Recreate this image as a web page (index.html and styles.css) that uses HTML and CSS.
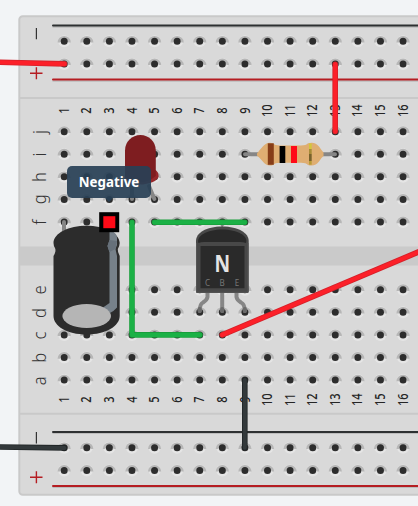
FILE: index.html
```
<!DOCTYPE html>
<html lang="en">
<head>
<meta charset="utf-8">
<title>Breadboard circuit</title>
<link rel="stylesheet" href="styles.css">
</head>
<body>
<main class="workspace">
<svg class="canvas" width="418" height="506" viewBox="0 0 418 506">
  <defs>
    <g id="hole">
      <circle r="6" class="hole-low"/>
      <path d="M-6.6 1.2A6.6 6.6 0 1 1 6.6 1.2H4.2A4.4 4.4 0 0 0-4.2 1.2Z" class="hole-shade"/>
      <circle r="3.5" class="hole-core"/>
    </g>
  </defs>

  <!-- board -->
  <rect class="board" x="19.3" y="16.2" width="440" height="478.6" rx="3.5"/>
  <path class="seam" d="M20 98H418M20 413.8H418"/>
  <rect class="trench" x="20" y="246.5" width="398" height="19"/>
  <path class="rail-shadow" d="M53 27H418M53 81H418M53 433.3H418M53 487.3H418"/>
  <path class="rail-dark" d="M53 25.5H418M53 432H418"/>
  <path class="rail-red" d="M53 79.6H418M53 486H418"/>
  <path class="sign-dark" d="M36.4 28V39.3M36.4 432V443.6"/>
  <path class="sign-red" d="M30 73.3H42.5M36.4 67.2V79.3M30 477.3H42.5M36.4 471.2V483.3"/>
  <g id="holes"></g>
  <g id="labels"></g>

  <!-- LED -->
  <path class="leg" d="M132 184V199M149 186L154.4 199"/>
  <path class="led-rim" d="M125 172V178Q132 185 143 184.500Q158 182 158.600 176Q158.500 172 155.600 170Z"/>
  <path class="led" d="M125 176V150.500A15.400 15.400 0 0 1 155.800 150.500V176Q149 182 140 182Q129 181 125 176Z"/>

  <!-- resistor -->
  <path class="leg" d="M245 154.2H261M319 154.2H335"/>
  <path class="resistor" d="M257 153.5Q260 149.5 262.8 146.5Q267 141.2 273 143.3Q275 145.5 280 145.5H301Q306 145.5 308 143.3Q315 141.2 319 146.5Q321 149.5 323.5 152.5V156Q321 158 319 161.5Q315 167 308 165Q306 162.8 301 162.8H280Q275 162.8 273 165Q267 167 262.8 161.5Q260 158 257 155.5Z"/>
  <path fill="#863d18" d="M267.8 143.3H273.8V164.8H267.8Z"/>
  <path fill="#000" d="M279.6 146H285.3V163H279.6Z"/>
  <path fill="#ff0a17" d="M291 146H297V163H291Z"/>
  <path fill="#d3c63a" d="M309 143.5H311.700V149H309Z"/>
  <path fill="#a78b37" d="M309 149H311.700V154H309Z"/>
  <path fill="#77612c" d="M309 154H311.700V161H309Z"/>
  <path fill="#b99b35" d="M309 161H311.700V164.700H309Z"/>

  <!-- capacitor -->
  <path class="leg" d="M64 222V234"/>
  <path class="can" d="M53.500 243C53.500 233 69 225.700 86.500 225.700S119.700 233 119.700 243Q119.700 246 117.800 249Q117.500 252 119.700 256V316C119.700 326 106 334.500 86.500 334.500S53.500 326 53.500 316V256Q56.500 251 55 248Q53.500 246 53.500 243Z"/>
  <path class="can-stripe" d="M109.500 232L113.500 232Q117 234 117 238V245L115.500 249L117 256V307.500Q114 311 110 313L103 307.500L109.500 303V252.500L107.500 246L109.500 240Z"/>
  <path class="can-crease" d="M109.500 240L107.500 246L109.500 252L115.500 249L117 241Z"/>
  <ellipse class="can-top" cx="86.700" cy="316" rx="24.300" ry="12"/>

  <!-- transistor -->
  <path class="leg-wide" d="M207.500 292V297Q207 300 203 302.500Q199.700 304 199.700 311M222.200 292V311M236.500 292V297Q237 300 241 302.500Q244.800 304 244.800 311"/>
  <path class="leg-tip" d="M199.700 309V311M222.200 309V311M244.800 309V311"/>
  <path d="M222.200 222V229" stroke="#888" stroke-width="2"/>
  <path fill="#484848" d="M196 241C196 233 206 226.500 222.200 226.500S248.700 233 248.700 241V292Q248.700 293 247 293H197.500Q196 293 196 291.500Z"/>
  <path fill="#292929" d="M198.500 243C196 236 207 229.500 222.200 229.500S249 236 246 243Q243 242 240 242H204Q201 242 198.500 243Z"/>
  <path fill="#2a2a2a" d="M200.500 246H244.500V288.300H200.500Z"/>
  <path fill="none" stroke="#555" d="M196.600 243V292.300H248V243"/>
  <text class="type-mark" transform="translate(222.300 271.600) scale(.8 1)">N</text>
  <g class="pins"><text x="207.500" y="285.500">C</text><text x="222.200" y="285.500">B</text><text x="237" y="285.500">E</text></g>

  <!-- wires -->
  <g class="wire green-edge"><path d="M132 222.300V334.900H200M154.400 222.300H244.800"/></g>
  <g class="wire-core green"><path d="M132 222.300V334.900H200M154.400 222.300H244.800"/></g>
  <g class="wire red-edge"><path d="M-5 62.200L64.500 63.900M335.200 64.200V131.500M222.200 334.900L423 250"/></g>
  <g class="wire-core red"><path d="M-5 62.200L64.500 63.900M335.200 64.200V131.500M222.200 334.900L423 250"/></g>
  <g class="wire black-edge"><path d="M-5 447L64.500 447.900M244.800 380V447.700"/></g>
  <g class="wire-core black"><path d="M-5 447L64.500 447.900M244.800 380V447.700"/></g>

  <!-- highlighted terminal -->
  <rect x="99.200" y="212.200" width="20" height="20" fill="#000"/>
  <rect x="103.300" y="216.200" width="12" height="12" fill="#ff0a17"/>
</svg>
<div class="tooltip">Negative</div>
</main>
<script src="board.js"></script>
</body>
</html>
```
FILE: styles.css
```
body { margin: 0; background: #f2f4f6; overflow: hidden; }
.workspace { position: relative; width: 418px; height: 506px; overflow: hidden; }
.canvas { display: block; font-family: "Noto Sans", sans-serif; }
.board { fill: #d9d9d9; stroke: #c9c9c9; stroke-width: 2; }
.seam { stroke: #c9c9c9; stroke-width: 2; }
.trench { fill: #cacaca; }
.rail-dark, .rail-red, .rail-shadow { fill: none; stroke-width: 2; stroke-linecap: round; }
.rail-dark { stroke: #2d3031; }
.rail-red { stroke: #b51d22; }
.rail-shadow { stroke: #bcbcbc; stroke-width: 1.4; }
.sign-dark { stroke: #333; stroke-width: 1.2; }
.sign-red { stroke: #b51d22; stroke-width: 1.4; }
.hole-low { fill: #e5e5e5; }
.hole-shade { fill: #b6b6b6; }
.hole-core { fill: #2d2d2d; }
.number { font-size: 13.5px; font-weight: 500; fill: #252525; text-anchor: middle; }
.letter { font-size: 18.5px; font-weight: 300; fill: #333; text-anchor: middle; }
.leg, .leg-wide, .leg-tip { fill: none; stroke: #868686; stroke-width: 4; stroke-linecap: round; }
.leg-tip { stroke: #6b6b6b; }
.led { fill: #7e1d20; }
.led-rim { fill: #97282c; }
.resistor { fill: #dfae72; }
.can { fill: #2c2c2c; }
.can-stripe { fill: #77818a; }
.can-crease { fill: #66707a; }
.can-top { fill: #b5b5b5; }
.type-mark { font-size: 24px; font-weight: 700; fill: #e4e4e4; text-anchor: middle; }
.pins { font-size: 8px; fill: #777; text-anchor: middle; }
.wire, .wire-core { fill: none; stroke-linecap: round; stroke-linejoin: round; }
.wire { stroke-width: 5.6px; }
.wire-core { stroke-width: 4px; }
.green-edge { stroke: #189e3b; }
.green { stroke: #1bb146; }
.red-edge { stroke: #d5212a; }
.red { stroke: #fc2029; }
.black-edge { stroke: #202526; }
.black { stroke: #33393b; }
.tooltip {
  position: absolute; left: 67px; top: 166px; width: 84px; height: 32px;
  border-radius: 5px; background: rgba(40, 64, 86, .92); color: #fff;
  font: 700 13.3px/32px "Noto Sans", sans-serif; text-align: center;
}
.tooltip::after {
  content: ""; position: absolute; left: 38px; top: 32px;
  border: 4px solid transparent; border-top-color: rgba(40, 64, 86, .92); border-bottom: 0;
}
```
FILE: board.js
```
const pitch = 22.59;
const rows = [41.3, 63.9, 131.7, 154.2, 176.8, 199.4, 222, 289.7, 312.3, 334.9, 357.5, 380.1, 447.8, 470.4];
const letters = { j: 132, i: 154.5, h: 177, g: 199.3, f: 222.3, e: 290, d: 313, c: 335.5, b: 357.8, a: 380.8 };
let holes = '';
let labels = '';
for (let column = 0; column < 16; column++) {
  const x = 64.2 + pitch * column;
  for (const y of rows) holes += `<use href="#hole" x="${x}" y="${y}"/>`;
  for (const y of [110.7, 399.7]) {
    labels += `<text class="number" transform="translate(${x + 4.6} ${y}) rotate(-90) scale(.82 1)">${column + 1}</text>`;
  }
}
for (const [letter, y] of Object.entries(letters)) {
  labels += `<text class="letter" transform="translate(45.6 ${y}) rotate(-90) scale(.9 1)">${letter}</text>`;
}
document.getElementById('holes').innerHTML = holes;
document.getElementById('labels').innerHTML = labels;
```
